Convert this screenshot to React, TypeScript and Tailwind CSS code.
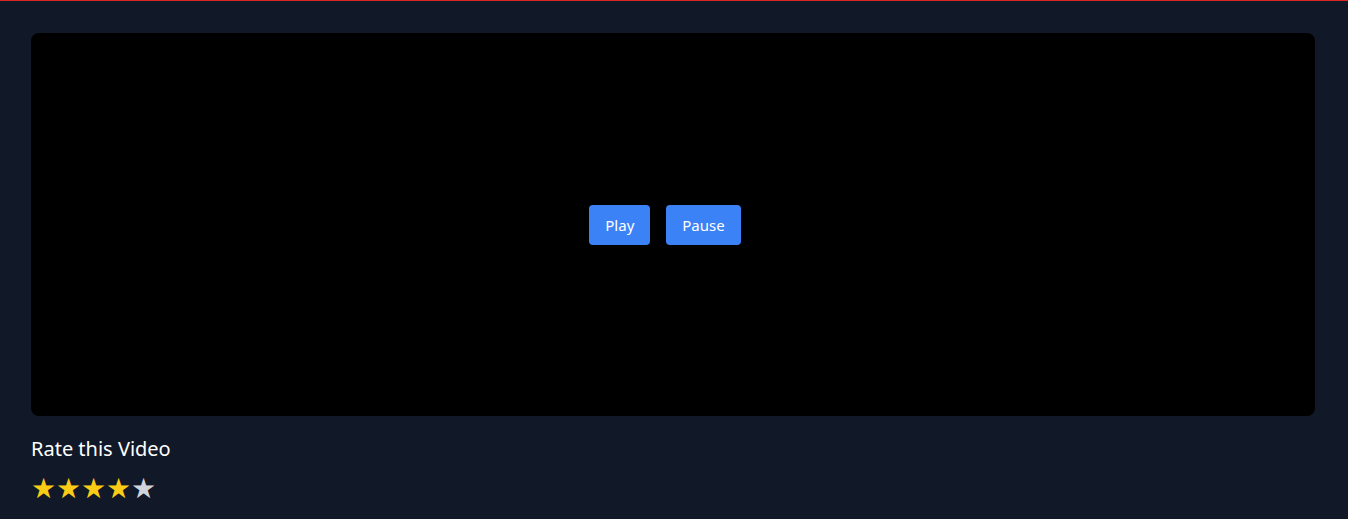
import { useState } from 'react'

export default function App() {
  const [rating, setRating] = useState(4)
  const stars = [1, 2, 3, 4, 5]

  return (
    <div className="min-h-screen border-t border-[#dc2626] bg-[#111827] pt-8 pl-[31px] pr-[33px] font-['Noto_Sans',sans-serif] text-white">
      <div className="flex h-[383px] items-center justify-center rounded-lg bg-black">
        <button className="mr-4 rounded bg-[#3b82f6] px-4 py-2 text-[15px] leading-6 text-white">Play</button>
        <button className="mr-4 rounded bg-[#3b82f6] px-4 py-2 text-[15px] leading-6 text-white">Pause</button>
      </div>
      <h2 className="mt-[19px] text-xl">Rate this Video</h2>
      <div className="mt-2 flex">
        {stars.map((n) => (
          <span
            key={n}
            onClick={() => setRating(n)}
            className={`cursor-pointer text-[28px] leading-8 ${n <= rating ? 'text-[#facc15]' : 'text-[#d1d5db]'}`}
          >
            ★
          </span>
        ))}
      </div>
    </div>
  )
}
